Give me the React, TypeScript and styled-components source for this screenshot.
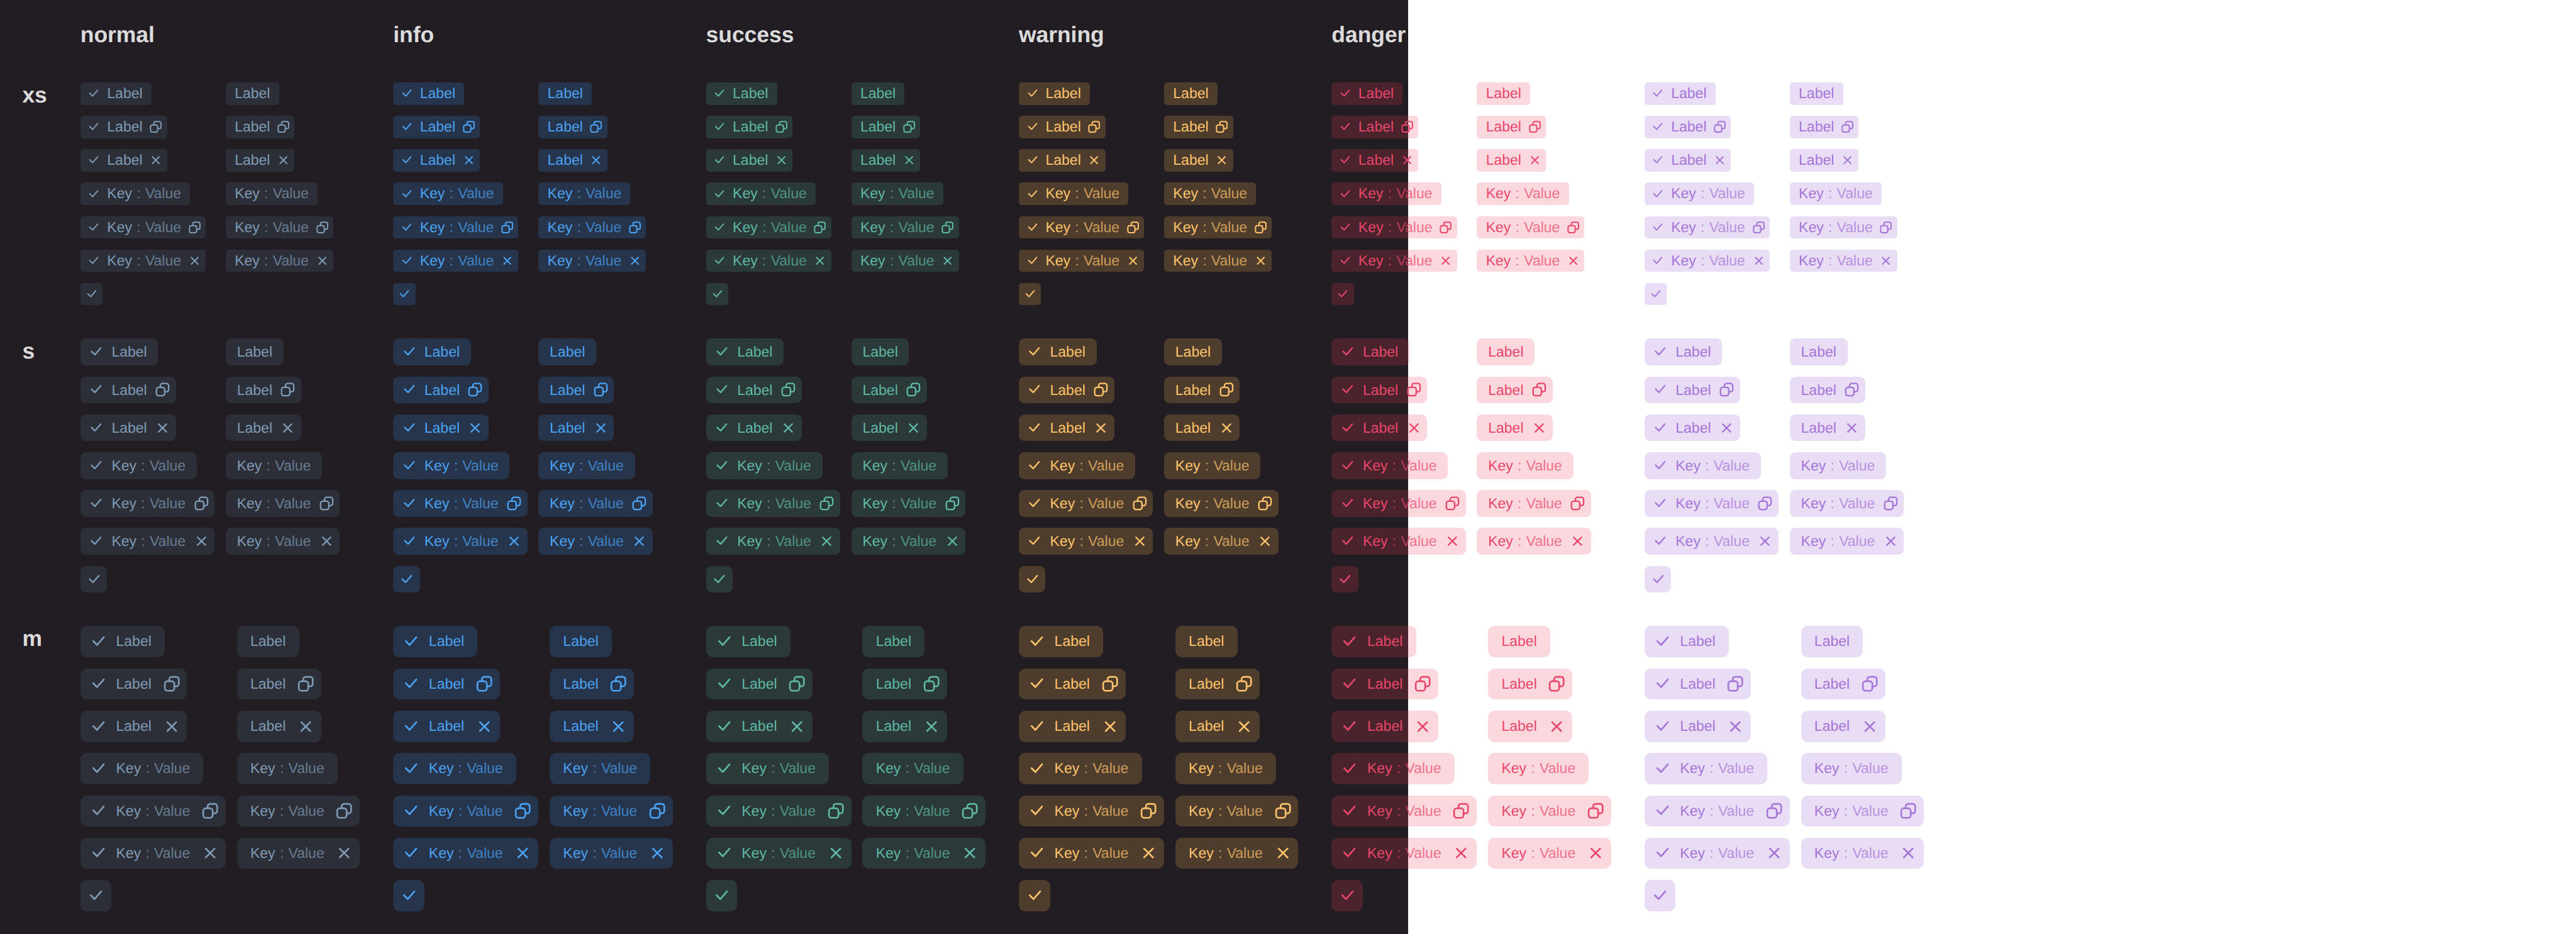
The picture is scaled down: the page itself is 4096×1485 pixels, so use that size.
import React from "react";
import styled, { createGlobalStyle } from "styled-components";

/* One design unit, in window pixels. */
const UNIT = 4096 / 2312;
const u = (n: number) => `${+(n * UNIT).toFixed(3)}px`;

type Size = "xs" | "s" | "m";
type Theme = "normal" | "info" | "success" | "warning" | "danger" | "utility";
type Action = "copy" | "close";

const themes: Record<Theme, { text: string; base: string }> = {
  normal: { text: "rgb(127, 155, 181)", base: "rgba(115, 155, 185, 0.15)" },
  info: { text: "rgb(76, 162, 243)", base: "rgba(54, 151, 241, 0.2)" },
  success: { text: "rgb(95, 184, 165)", base: "rgba(80, 170, 150, 0.2)" },
  warning: { text: "rgb(255, 196, 108)", base: "rgba(255, 190, 92, 0.2)" },
  danger: { text: "rgb(233, 70, 108)", base: "rgba(233, 58, 90, 0.2)" },
  utility: { text: "rgb(165, 117, 215)", base: "rgba(143, 82, 204, 0.2)" },
};

const sizes: Record<
  Size,
  { height: number; radius: number; icon: number; side: number; pad: number; gap: number; column: number }
> = {
  xs: { height: 20, radius: 3, icon: 12, side: 24, pad: 8, gap: 2, column: 130.5 },
  s: { height: 24, radius: 5, icon: 14, side: 28, pad: 10, gap: 2, column: 130.5 },
  m: { height: 28, radius: 6, icon: 16, side: 32, pad: 12, gap: 4, column: 140.5 },
};

const GlobalStyle = createGlobalStyle`
  body {
    margin: 0;
    background: #fff;
    overflow: hidden;
    text-rendering: geometricPrecision;
    font-family: "Liberation Sans", Arial, sans-serif;
  }
`;

const Surface = styled.main`
  box-sizing: border-box;
  width: ${u(1264)};
  height: 1485px;
  padding: ${u(20)};
  background: #221d22;
`;

const Matrix = styled.div`
  display: grid;
  grid-template-columns: ${u(52.15)} repeat(6, ${u(280.75)});
  grid-template-rows: ${u(54)};
  width: max-content;
`;

const Title = styled.div`
  height: ${u(23)};
  line-height: ${u(23)};
  font-size: ${u(20)};
  font-weight: 700;
  color: rgba(255, 255, 255, 0.85);
`;

const Block = styled.div<{ $size: Size }>`
  display: grid;
  grid-template-columns: ${(p) => u(sizes[p.$size].column)} max-content;
  grid-auto-rows: ${(p) => u(sizes[p.$size].height)};
  row-gap: ${u(10)};
  margin-bottom: ${u(30)};
`;

const Cell = styled.div`
  display: flex;
  align-items: flex-start;
`;

const Chip = styled.div<{ $size: Size; $theme: Theme }>`
  display: flex;
  align-items: center;
  height: ${(p) => u(sizes[p.$size].height)};
  border-radius: ${(p) => u(sizes[p.$size].radius)};
  color: ${(p) => themes[p.$theme].text};
  background: ${(p) => themes[p.$theme].base};
`;

const IconSlot = styled.span<{ $width: number }>`
  display: flex;
  justify-content: center;
  width: ${(p) => u(p.$width)};
`;

const Text = styled.span<{ $size: Size; $start: boolean; $end: boolean }>`
  padding-left: ${(p) => (p.$start ? u(sizes[p.$size].pad) : 0)};
  padding-right: ${(p) => u(p.$end ? sizes[p.$size].pad : sizes[p.$size].gap)};
  font-size: ${u(13)};
  line-height: ${(p) => u(sizes[p.$size].height)};
  white-space: nowrap;
`;

const Separator = styled.span`
  margin: 0 ${u(4.1)};
`;

const Value = styled.span`
  opacity: 0.7;
`;

const Icon = styled.svg<{ $width: number }>`
  display: block;
  width: ${(p) => u(p.$width)};
  height: ${(p) => u(p.$width)};
  fill: currentColor;
`;

const icons = {
  check:
    "M13.488 3.43a.75.75 0 0 1 .081 1.058l-6 7a.75.75 0 0 1-1.1.042l-3.5-3.5A.75.75 0 0 1 4.03 6.97l2.928 2.927 5.473-6.385a.75.75 0 0 1 1.057-.081",
  copy:
    "M12 2.5H8A1.5 1.5 0 0 0 6.5 4v1H8a3 3 0 0 1 3 3v1.5h1A1.5 1.5 0 0 0 13.5 8V4A1.5 1.5 0 0 0 12 2.5M11 11h1a3 3 0 0 0 3-3V4a3 3 0 0 0-3-3H8a3 3 0 0 0-3 3v1H4a3 3 0 0 0-3 3v4a3 3 0 0 0 3 3h4a3 3 0 0 0 3-3zM4 6.5h4A1.5 1.5 0 0 1 9.5 8v4A1.5 1.5 0 0 1 8 13.5H4A1.5 1.5 0 0 1 2.5 12V8A1.5 1.5 0 0 1 4 6.5",
  close:
    "M3.47 3.47a.75.75 0 0 1 1.06 0L8 6.94l3.47-3.47a.75.75 0 1 1 1.06 1.06L9.06 8l3.47 3.47a.75.75 0 1 1-1.06 1.06L8 9.06l-3.47 3.47a.75.75 0 0 1-1.06-1.06L6.94 8 3.47 4.53a.75.75 0 0 1 0-1.06",
};

function Glyph({ name, size }: { name: keyof typeof icons; size: Size }) {
  return (
    <Icon viewBox="0 0 16 16" $width={sizes[size].icon}>
      <path fillRule="evenodd" clipRule="evenodd" d={icons[name]} />
    </Icon>
  );
}

interface LabelProps {
  theme: Theme;
  size: Size;
  icon?: boolean;
  text?: string;
  value?: string;
  action?: Action;
}

function Label({ theme, size, icon, text, value, action }: LabelProps) {
  const s = sizes[size];
  return (
    <Chip $size={size} $theme={theme}>
      {icon && (
        <IconSlot $width={text ? s.side : s.height}>
          <Glyph name="check" size={size} />
        </IconSlot>
      )}
      {text && (
        <Text $size={size} $start={!icon} $end={!action}>
          {text}
          {value && (
            <Value>
              <Separator>:</Separator>
              {value}
            </Value>
          )}
        </Text>
      )}
      {action && (
        <IconSlot $width={s.height}>
          <Glyph name={action} size={size} />
        </IconSlot>
      )}
    </Chip>
  );
}

const rows: { text: string; value?: string; action?: Action }[] = [
  { text: "Label" },
  { text: "Label", action: "copy" },
  { text: "Label", action: "close" },
  { text: "Key", value: "Value" },
  { text: "Key", value: "Value", action: "copy" },
  { text: "Key", value: "Value", action: "close" },
];

const titled: Theme[] = ["normal", "info", "success", "warning", "danger"];
const allThemes: Theme[] = [...titled, "utility"];
const allSizes: Size[] = ["xs", "s", "m"];

export default function App() {
  return (
    <>
      <GlobalStyle />
      <Surface>
        <Matrix>
          <span />
          {titled.map((t) => (
            <Title key={t}>{t}</Title>
          ))}
          <span />
          {allSizes.map((size) => (
            <React.Fragment key={size}>
              <Title>{size}</Title>
              {allThemes.map((theme) => (
                <Block key={theme} $size={size}>
                  {rows.map((row, i) => (
                    <React.Fragment key={i}>
                      <Cell>
                        <Label theme={theme} size={size} icon {...row} />
                      </Cell>
                      <Cell>
                        <Label theme={theme} size={size} {...row} />
                      </Cell>
                    </React.Fragment>
                  ))}
                  <Cell>
                    <Label theme={theme} size={size} icon />
                  </Cell>
                </Block>
              ))}
            </React.Fragment>
          ))}
        </Matrix>
      </Surface>
    </>
  );
}
